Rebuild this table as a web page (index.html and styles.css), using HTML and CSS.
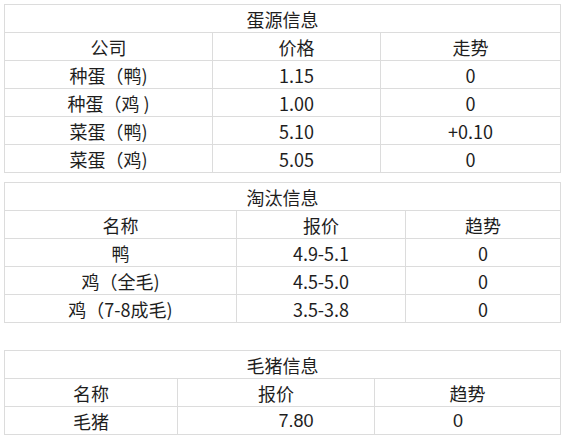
FILE: index.html
```html
<!DOCTYPE html>
<html lang="zh-CN">
<head>
<meta charset="utf-8">
<title>信息</title>
<link rel="stylesheet" href="styles.css">
</head>
<body>
<div class="page">
  <table class="info egg">
    <colgroup><col class="c1"><col class="c2"><col class="c3"></colgroup>
    <tr><td colspan="3">蛋源信息</td></tr>
    <tr><td>公司</td><td>价格</td><td>走势</td></tr>
    <tr><td>种蛋（鸭)</td><td>1.15</td><td>0</td></tr>
    <tr><td>种蛋（鸡 )</td><td>1.00</td><td>0</td></tr>
    <tr><td>菜蛋（鸭)</td><td>5.10</td><td>+0.10</td></tr>
    <tr><td>菜蛋（鸡)</td><td>5.05</td><td>0</td></tr>
  </table>

  <table class="info cull">
    <colgroup><col class="c1"><col class="c2"><col class="c3"></colgroup>
    <tr><td colspan="3">淘汰信息</td></tr>
    <tr><td>名称</td><td>报价</td><td>趋势</td></tr>
    <tr><td>鸭</td><td>4.9-5.1</td><td>0</td></tr>
    <tr><td>鸡（全毛)</td><td>4.5-5.0</td><td>0</td></tr>
    <tr><td>鸡（7-8成毛)</td><td>3.5-3.8</td><td>0</td></tr>
  </table>

  <table class="info pig">
    <colgroup><col class="c1"><col class="c2"><col class="c3"></colgroup>
    <tr><td colspan="3">毛猪信息</td></tr>
    <tr><td>名称</td><td>报价</td><td>趋势</td></tr>
    <tr><td>毛猪</td><td class="num price">7.80</td><td class="num trend">0</td></tr>
  </table>
</div>
</body>
</html>
```

FILE: styles.css
```css
html, body {
  margin: 0;
  padding: 0;
  background: #ffffff;
}

body {
  font-family: "Microsoft YaHei", "Noto Sans CJK SC", "Noto Sans", sans-serif;
  font-size: 18px;
  color: #1e1e1e;
}

.page {
  padding: 4px 0 0 4px;
}

.info {
  width: 556px;
  border-collapse: collapse;
  table-layout: fixed;
}

.info td {
  border: 1px solid #dcdcdc;
  height: 27px;
  padding: 0;
  text-align: center;
  vertical-align: middle;
  line-height: 22px;
  white-space: nowrap;
}

.egg { margin-bottom: 9px; }
.egg .c1 { width: 208px; }
.egg .c2 { width: 168px; }
.egg .c3 { width: 180px; }

.cull { margin-bottom: 27px; }
.cull .c1 { width: 232px; }
.cull .c2 { width: 169px; }
.cull .c3 { width: 155px; }

.pig .c1 { width: 173px; }
.pig .c2 { width: 197px; }
.pig .c3 { width: 186px; }

.info td.num {
  font-family: "Liberation Sans", Arial, sans-serif;
}

.info td.price { padding-left: 40px; }
.info td.trend { padding-right: 19px; }
```
